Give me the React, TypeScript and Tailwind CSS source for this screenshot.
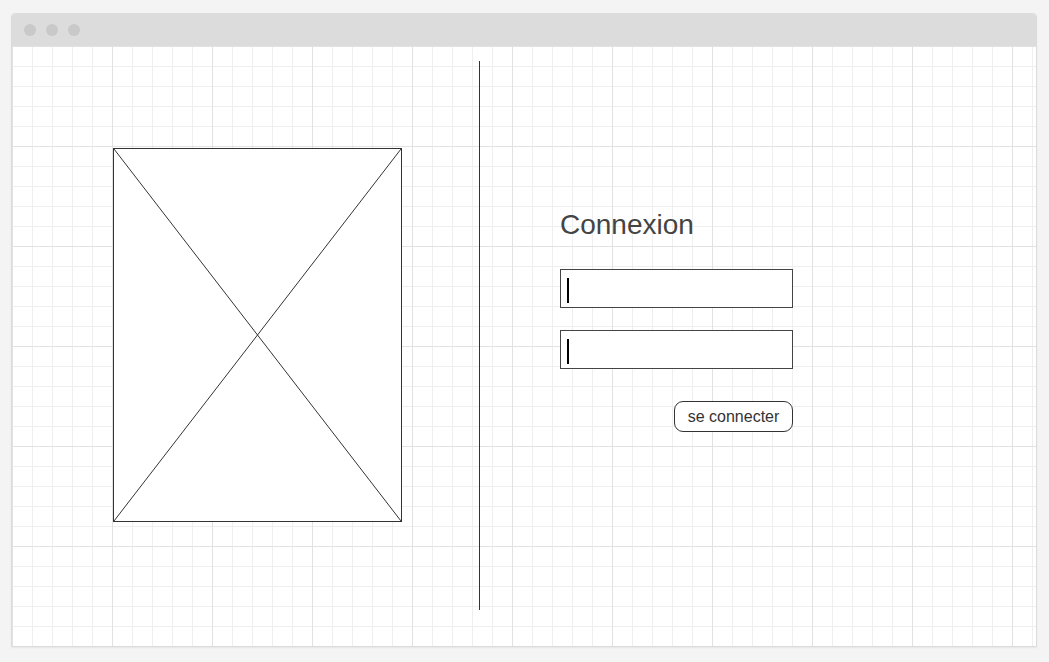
export default function App() {
  return (
    <div className="min-h-screen bg-[#f4f4f4] pt-[13px] pl-[11px] font-['Liberation_Sans',Arial,sans-serif]">
      <div className="w-[1026px] border border-[#dcdcdc] rounded-t-[4px] bg-white shadow-[0_1px_2px_rgba(0,0,0,0.06)] overflow-hidden">
        {/* title bar */}
        <div className="h-[32px] bg-[#dcdcdc] flex items-center gap-[10px] pl-[12px]">
          <span className="w-[12px] h-[12px] rounded-full bg-[#c9c9c9]" />
          <span className="w-[12px] h-[12px] rounded-full bg-[#c9c9c9]" />
          <span className="w-[12px] h-[12px] rounded-full bg-[#c9c9c9]" />
        </div>

        {/* grid canvas */}
        <div className="h-[600px] flex items-start bg-white bg-[image:linear-gradient(to_right,#e2e2e2_1px,transparent_1px),linear-gradient(to_bottom,#e2e2e2_1px,transparent_1px),linear-gradient(to_right,#efefef_1px,transparent_1px),linear-gradient(to_bottom,#efefef_1px,transparent_1px)] bg-[size:100px_100px,100px_100px,20px_20px,20px_20px]">
          {/* image placeholder */}
          <div className="ml-[101px] mt-[102px] w-[289px] h-[374px] border border-[#333] bg-white">
            <svg className="w-full h-full block" viewBox="0 0 287 372" preserveAspectRatio="none">
              <line x1="0" y1="0" x2="287" y2="372" stroke="#333" strokeWidth="1" />
              <line x1="287" y1="0" x2="0" y2="372" stroke="#333" strokeWidth="1" />
            </svg>
          </div>

          {/* divider */}
          <div className="ml-[77px] mt-[15px] w-px h-[549px] bg-[#333]" />

          {/* login form */}
          <div className="ml-[80px] mt-[165px] w-[233px] flex flex-col">
            <h1 className="text-[28px] leading-none text-[#444]">Connexion</h1>
            <div className="mt-[30px] h-[39px] border border-[#444] bg-white pl-[6px] pt-[8px]">
              <div className="w-[2px] h-[25px] bg-black" />
            </div>
            <div className="mt-[22px] h-[39px] border border-[#444] bg-white pl-[6px] pt-[8px]">
              <div className="w-[2px] h-[25px] bg-black" />
            </div>
            <div className="mt-[32px] flex justify-end">
              <button className="w-[119px] h-[31px] border border-[#333] rounded-[9px] bg-white text-[16px] text-[#333] leading-none">
                se connecter
              </button>
            </div>
          </div>
        </div>
      </div>
    </div>
  );
}
